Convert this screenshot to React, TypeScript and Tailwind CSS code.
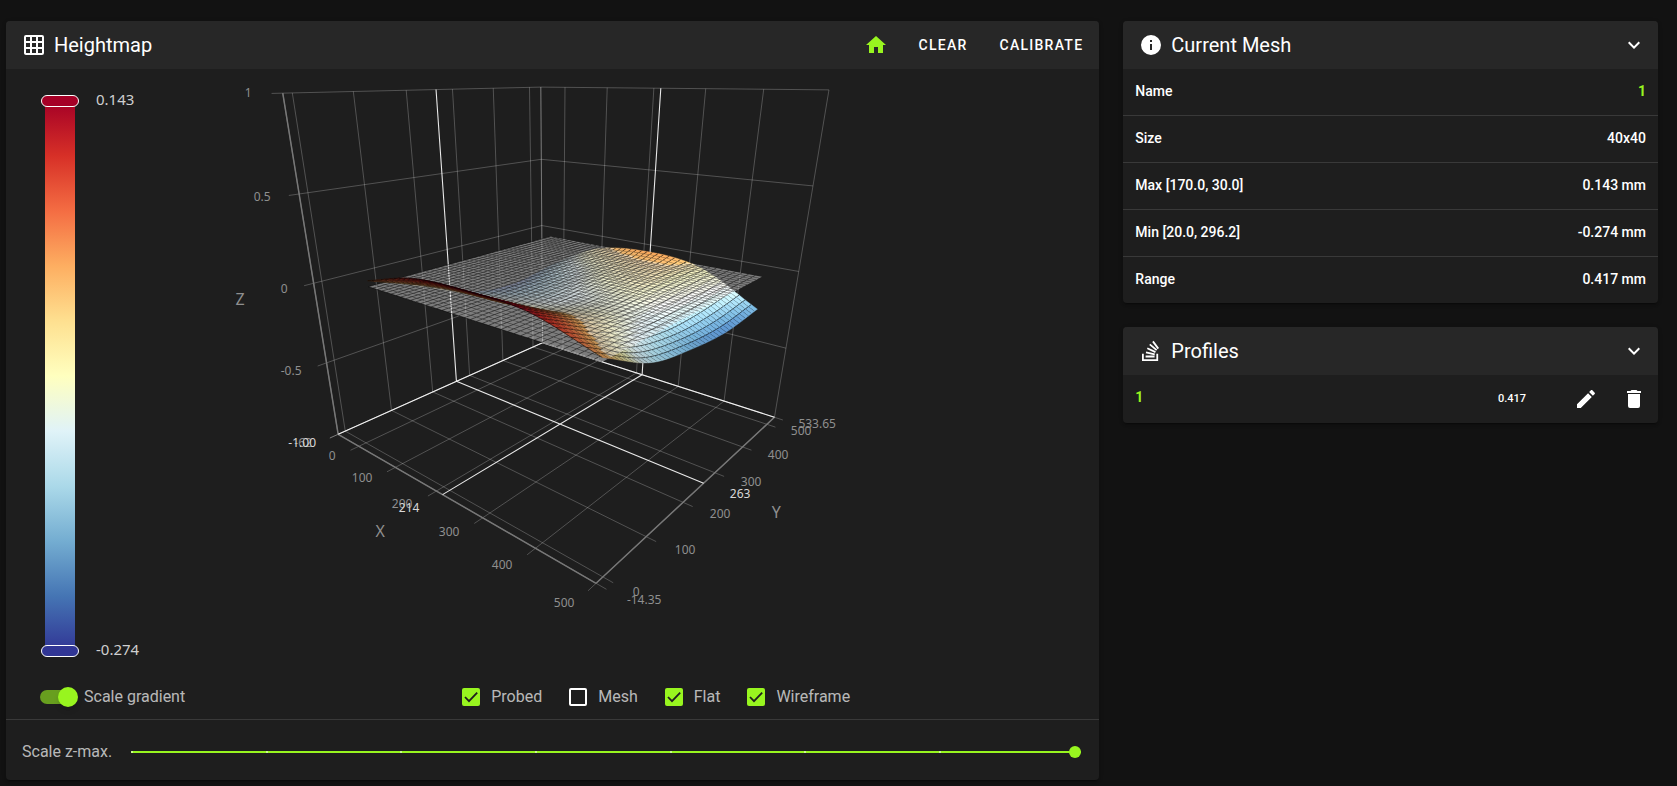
import { useMemo, useState } from "react";
import type { ReactNode } from "react";

const icons = {
  grid: "M10,4V8H14V4H10M16,4V8H20V4H16M16,10V14H20V10H16M16,16V20H20V16H16M14,20V16H10V20H14M8,20V16H4V20H8M8,14V10H4V14H8M8,8V4H4V8H8M10,14H14V10H10V14M4,2H20A2,2 0 0,1 22,4V20A2,2 0 0,1 20,22H4C2.92,22 2,21.1 2,20V4A2,2 0 0,1 4,2Z",
  home: "M10,20V14H14V20H19V12H22L12,3L2,12H5V20H10Z",
  info: "M13,9H11V7H13M13,17H11V11H13M12,2A10,10 0 0,0 2,12A10,10 0 0,0 12,22A10,10 0 0,0 22,12A10,10 0 0,0 12,2Z",
  chevron: "M7.41,8.58L12,13.17L16.59,8.58L18,10L12,16L6,10L7.41,8.58Z",
  pencil:
    "M20.71,7.04C21.1,6.65 21.1,6 20.71,5.63L18.37,3.29C18,2.9 17.35,2.9 16.96,3.29L15.12,5.12L18.87,8.87M3,17.25V21H6.75L17.81,9.93L14.06,6.18L3,17.25Z",
  trash: "M19,4H15.5L14.5,3H9.5L8.5,4H5V6H19M6,19A2,2 0 0,0 8,21H16A2,2 0 0,0 18,19V7H6V19Z",
  stack:
    "M17.36,20.2V14.82H19.15V22H3V14.82H4.8V20.2H17.36M6.77,14.32L7.14,12.56L15.93,14.41L15.56,16.17L6.77,14.32M7.93,10.11L8.69,8.5L16.83,12.28L16.07,13.9L7.93,10.11M10.19,6.12L11.34,4.74L18.24,10.5L17.09,11.87L10.19,6.12M14.64,1.87L20,9.08L18.56,10.15L13.2,2.94L14.64,1.87M6.59,18.41V16.61H15.57V18.41H6.59Z",
};

function Icon({ name, className = "" }: { name: keyof typeof icons; className?: string }) {
  return (
    <svg viewBox="0 0 24 24" aria-hidden="true" className={`size-6 shrink-0 fill-current ${className}`}>
      <path d={icons[name]} />
    </svg>
  );
}

/* ---------- Perspective projection of the unit box ---------- */

type P = [number, number];

const X_MIN = -62;
const X_MAX = 500;
const Y_MIN = -14.35;
const Y_MAX = 533.65;

const toU = (x: number) => (x - X_MIN) / (X_MAX - X_MIN);
const toV = (y: number) => (y - Y_MIN) / (Y_MAX - Y_MIN);

function project(u: number, v: number, z: number): P {
  const t = (z + 1) / 2;
  const w = 1 - 0.29561 * u + 0.33953 * v - 0.2056 * t;
  return [
    (338 + 81.75 * u + 388.56 * v - 113.5 * t) / w,
    (434.3 - 23.43 * u + 24.76 * v - 360.3 * t) / w,
  ];
}

const fmt = ([x, y]: P) => `${x.toFixed(2)},${y.toFixed(2)}`;
const seg = (a: P, b: P) => `M${fmt(a)}L${fmt(b)}`;

/* ---------- Mesh ---------- */

const CONTROL = [
  [0.035, 0.125, 0.142, 0.125, 0.02],
  [-0.09, -0.06, -0.045, -0.015, -0.14],
  [-0.23, -0.17, -0.11, -0.085, -0.2],
  [-0.265, -0.15, -0.055, -0.055, -0.225],
  [-0.22, -0.03, 0.022, -0.015, -0.2],
];

function spline(p: number[], t: number) {
  const n = p.length - 1;
  const at = (i: number) => (i < 0 ? 2 * p[0] - p[1] : i > n ? 2 * p[n] - p[n - 1] : p[i]);
  const i = Math.min(n - 1, Math.floor(t * n));
  const f = t * n - i;
  const [a, b, c, d] = [at(i - 1), at(i), at(i + 1), at(i + 2)];
  return b + 0.5 * f * (c - a + f * (2 * a - 5 * b + 4 * c - d + f * (3 * (b - c) + d - a)));
}

const height = (s: number, t: number) => spline(CONTROL.map((row) => spline(row, s)), t);

const RAMP = [
  [49, 54, 149],
  [69, 117, 180],
  [116, 173, 209],
  [171, 217, 233],
  [224, 243, 248],
  [255, 255, 191],
  [254, 224, 144],
  [253, 174, 97],
  [244, 109, 67],
  [215, 48, 39],
  [165, 0, 38],
];

function shade(z: number, light: number) {
  const k = Math.max(0, Math.min(0.9999, (z + 0.274) / 0.417)) * 10;
  const i = Math.floor(k);
  const rgb = RAMP[i].map((c, n) => Math.min(255, Math.round((c + (RAMP[i + 1][n] - c) * (k - i)) * light)));
  return `rgb(${rgb.join(",")})`;
}

const CELLS = 39;

interface Face {
  key: string;
  depth: number;
  surface: string;
  edges: string;
  color: string;
  flat: string;
  flatEdges: string;
  above: boolean;
}

function buildFaces(): Face[] {
  const u = (i: number) => toU(20 + (446 * i) / CELLS);
  const v = (j: number) => toV(30 + (436 * j) / CELLS);
  const z = (i: number, j: number) => height(i / CELLS, j / CELLS);
  const faces: Face[] = [];
  for (let i = 0; i < CELLS; i++) {
    for (let j = 0; j < CELLS; j++) {
      const ring: [number, number][] = [
        [i, j],
        [i + 1, j],
        [i + 1, j + 1],
        [i, j + 1],
      ];
      const top = ring.map(([a, b]) => project(u(a), v(b), z(a, b)));
      const base = ring.map(([a, b]) => project(u(a), v(b), 0));
      const mid = ring.reduce((sum, [a, b]) => sum + z(a, b), 0) / 4;
      const fx = ((z(i + 1, j) - z(i, j)) * 50) / (80 / CELLS);
      const fy = ((z(i, j + 1) - z(i, j)) * 50) / (80 / CELLS);
      const lambert = (-0.55 * fx + 0.5 * fy + 0.7) / Math.hypot(fx, fy, 1);
      faces.push({
        key: `${i}-${j}`,
        depth: -0.29561 * u(i) + 0.33953 * v(j),
        surface: `M${top.map(fmt).join("L")}Z`,
        edges: `M${fmt(top[3])}L${fmt(top[0])}L${fmt(top[1])}`,
        color: shade(mid, Math.max(0.5, Math.min(1.1, 1.4 * lambert - 0.1))),
        flat: `M${base.map(fmt).join("L")}Z`,
        flatEdges: `M${fmt(base[3])}L${fmt(base[0])}L${fmt(base[1])}`,
        above: mid > 0,
      });
    }
  }
  return faces.sort((a, b) => b.depth - a.depth);
}

function Surface({ probed, flat, wire }: { probed: boolean; flat: boolean; wire: boolean }) {
  const faces = useMemo(buildFaces, []);
  return (
    <g>
      {faces.map((f) => {
        const surface = probed && (
          <g key="s">
            <path d={f.surface} fill={f.color} stroke={f.color} strokeWidth="0.4" />
            {wire && <path d={f.edges} fill="none" stroke="#000" strokeOpacity="0.55" strokeWidth="1" />}
          </g>
        );
        const plane = flat && (
          <g key="p">
            <path d={f.flat} fill="#fff" fillOpacity="0.42" />
            {wire && <path d={f.flatEdges} fill="none" stroke="#000" strokeOpacity="0.45" strokeWidth="1" />}
          </g>
        );
        return <g key={f.key}>{f.above ? [plane, surface] : [surface, plane]}</g>;
      })}
    </g>
  );
}

const X_TICKS = [0, 100, 200, 300, 400, 500];
const Y_TICKS = [0, 100, 200, 300, 400, 500];
const Z_TICKS = [-1, -0.5, 0, 0.5, 1];

const gridPath = [
  ...Z_TICKS.map((z) => seg(project(0, -0.03, z), project(0, 1, z)) + seg(project(0, 1, z), project(1, 1, z))),
  ...[X_MIN, ...X_TICKS].map(
    (x) => seg(project(toU(x), 1, 1), project(toU(x), 1, -1)) + seg(project(toU(x), 1, -1), project(toU(x), -0.03, -1)),
  ),
  ...[Y_MIN, ...Y_TICKS, Y_MAX].map(
    (y) => seg(project(0, toV(y), 1), project(0, toV(y), -1)) + seg(project(0, toV(y), -1), project(1.028, toV(y), -1)),
  ),
].join("");

const axisPath =
  seg(project(0, 0, 1), project(0, 0, -1)) +
  seg(project(0, 0, -1), project(1, 0, -1)) +
  seg(project(1, 0, -1), project(1, 1, -1));

const PU = toU(214);
const PV = toV(263);
const pointerPath =
  seg(project(0, 0, -1), project(0, 1, -1)) +
  seg(project(0, 1, -1), project(1, 1, -1)) +
  seg(project(PU, 1, 1), project(PU, 1, -1)) +
  seg(project(PU, 1, -1), project(PU, 0, -1)) +
  seg(project(0, PV, 1), project(0, PV, -1)) +
  seg(project(0, PV, -1), project(1, PV, -1));

const LABELS: [string, number, number][] = [
  ["1", 248, 93],
  ["0.5", 262, 197],
  ["0", 284, 289],
  ["-0.5", 291, 371],
  ["-62", 303, 443],
  ["0", 332, 456],
  ["100", 362, 478],
  ["200", 402, 504],
  ["300", 449, 532],
  ["400", 502, 565],
  ["500", 564, 603],
  ["0", 636, 592],
  ["-14.35", 644, 600],
  ["100", 685, 550],
  ["200", 720, 514],
  ["300", 751, 482],
  ["400", 778, 455],
  ["500", 801, 431],
  ["533.65", 817, 424],
];

const POINTER_LABELS: [string, number, number][] = [
  ["-1.00", 302, 443],
  ["214", 409, 508],
  ["263", 740, 494],
];

const AXIS_NAMES: [string, number, number][] = [
  ["Z", 240, 299],
  ["X", 380, 531],
  ["Y", 776, 512],
];

function Plot(props: { probed: boolean; flat: boolean; wire: boolean }) {
  return (
    <svg
      viewBox="156 69 943 600"
      role="img"
      aria-label="Bed mesh"
      className="h-[600px] min-w-0 flex-1 font-['Noto_Sans',sans-serif]"
    >
      <path d={gridPath} fill="none" stroke="#fff" strokeOpacity="0.23" strokeWidth="1" />
      <path d={axisPath} fill="none" stroke="#777" strokeWidth="1.5" />
      <path d={pointerPath} fill="none" stroke="#fff" strokeOpacity="0.9" strokeWidth="1.1" />
      <Surface {...props} />
      <g textAnchor="middle" className="fill-[#8f8f8f] text-xs">
        {LABELS.map(([text, x, y]) => (
          <text key={`${text}-${x}`} x={x} y={y + 4}>
            {text}
          </text>
        ))}
      </g>
      <g textAnchor="middle" className="fill-[#d8d8d8] text-xs">
        {POINTER_LABELS.map(([text, x, y]) => (
          <text key={text} x={x} y={y + 4}>
            {text}
          </text>
        ))}
      </g>
      <g textAnchor="middle" className="fill-[#8f8f8f] text-base">
        {AXIS_NAMES.map(([text, x, y]) => (
          <text key={text} x={x} y={y + 6}>
            {text}
          </text>
        ))}
      </g>
    </svg>
  );
}

/* ---------- Controls ---------- */

function Legend() {
  return (
    <div className="mt-8 ml-[39px] flex h-[550px] w-[111px] shrink-0 gap-[21px] font-['Noto_Sans',sans-serif] text-[15px] leading-5 text-[#cfcfcf]">
      <div className="relative w-[30px] bg-[linear-gradient(to_bottom,#a50026,#d73027,#f46d43,#fdae61,#fee090,#ffffbf,#e0f3f8,#abd9e9,#74add1,#4575b4,#313695)]">
        <span className="absolute -top-1.5 -left-1 h-3 w-[38px] rounded-full border border-white bg-[#a50026]" />
        <span className="absolute -bottom-1.5 -left-1 h-3 w-[38px] rounded-full border border-white bg-[#313695]" />
      </div>
      <div className="-mt-3 -mb-2 flex flex-col justify-between">
        <span>0.143</span>
        <span>-0.274</span>
      </div>
    </div>
  );
}

function Check({ label, checked, onChange }: { label: string; checked: boolean; onChange: (v: boolean) => void }) {
  return (
    <label className="flex cursor-pointer items-center gap-[11px]">
      <span className="relative flex size-[18px]">
        <input
          type="checkbox"
          checked={checked}
          onChange={(e) => onChange(e.target.checked)}
          className="size-[18px] cursor-pointer appearance-none rounded-xs border-2 border-white checked:border-[#98f51f] checked:bg-[#98f51f]"
        />
        {checked && (
          <svg viewBox="0 0 18 18" aria-hidden="true" className="pointer-events-none absolute inset-0">
            <path d="M3,9L7,13.2L15.2,4.6" fill="none" stroke="#1e1e1e" strokeWidth="1.8" />
          </svg>
        )}
      </span>
      {label}
    </label>
  );
}

function Card({ children, className = "" }: { children: ReactNode; className?: string }) {
  return (
    <section
      className={`overflow-hidden rounded bg-[#1e1e1e] shadow-[0_3px_1px_-2px_rgba(0,0,0,0.2),0_2px_2px_rgba(0,0,0,0.14),0_1px_5px_rgba(0,0,0,0.12)] ${className}`}
    >
      {children}
    </section>
  );
}

function CardHeader({ icon, title, children }: { icon: keyof typeof icons; title: string; children: ReactNode }) {
  return (
    <header className="flex h-12 items-center gap-2 bg-[#272727] px-4">
      <Icon name={icon} />
      <h2 className="text-xl">{title}</h2>
      <div className="ml-auto flex items-center">{children}</div>
    </header>
  );
}

function Collapse({ title, open, onToggle }: { title: string; open: boolean; onToggle: () => void }) {
  return (
    <button type="button" aria-label={`Toggle ${title}`} aria-expanded={open} onClick={onToggle} className="-mr-1 cursor-pointer">
      <Icon name="chevron" />
    </button>
  );
}

const MESH_ROWS: [string, string][] = [
  ["Name", "1"],
  ["Size", "40x40"],
  ["Max [170.0, 30.0]", "0.143 mm"],
  ["Min [20.0, 296.2]", "-0.274 mm"],
  ["Range", "0.417 mm"],
];

export default function App() {
  const [scaleGradient, setScaleGradient] = useState(true);
  const [probed, setProbed] = useState(true);
  const [mesh, setMesh] = useState(false);
  const [flat, setFlat] = useState(true);
  const [wire, setWire] = useState(true);
  const [zMax, setZMax] = useState(7);
  const [meshOpen, setMeshOpen] = useState(true);
  const [profilesOpen, setProfilesOpen] = useState(true);

  return (
    <main className="grid min-h-screen grid-cols-12 items-start gap-6 bg-[#121212] pt-[21px] pr-[19px] pb-1 pl-1.5 font-[Roboto,sans-serif] text-white">
      <Card className="col-span-8">
        <CardHeader icon="grid" title="Heightmap">
          <button type="button" aria-label="Home" className="cursor-pointer px-[15px] text-[#98f51f]">
            <Icon name="home" />
          </button>
          <button type="button" className="cursor-pointer px-4 text-sm font-medium tracking-[0.09em]">
            CLEAR
          </button>
          <button type="button" className="-mr-4 cursor-pointer px-4 text-sm font-medium tracking-[0.09em]">
            CALIBRATE
          </button>
        </CardHeader>
        <div className="flex">
          <Legend />
          <Plot probed={probed} flat={flat} wire={wire} />
        </div>
        <div className="flex items-center pt-4 pb-2.5 text-base text-white/70">
          <label className="ml-[34px] flex w-[173px] shrink-0 cursor-pointer items-center gap-1.5">
            <span className="relative flex h-5 w-[38px] items-center">
              <input
                type="checkbox"
                role="switch"
                checked={scaleGradient}
                onChange={(e) => setScaleGradient(e.target.checked)}
                className="peer h-3.5 w-9 cursor-pointer appearance-none rounded-full bg-white/30 checked:bg-[#689f1f]"
              />
              <span className="pointer-events-none absolute top-0 left-0 size-5 rounded-full bg-[#bdbdbd] shadow-md peer-checked:left-[18px] peer-checked:bg-[#98f51f]" />
            </span>
            <span className="whitespace-nowrap">Scale gradient</span>
          </label>
          <div className="flex flex-1 items-center justify-center gap-[27px]">
            <Check label="Probed" checked={probed} onChange={setProbed} />
            <Check label="Mesh" checked={mesh} onChange={setMesh} />
            <Check label="Flat" checked={flat} onChange={setFlat} />
            <Check label="Wireframe" checked={wire} onChange={setWire} />
          </div>
        </div>
        <div className="flex items-center gap-[19px] border-t border-white/12 pt-5 pr-[18px] pb-4 pl-4 text-base text-white/70">
          <label htmlFor="z-max">Scale z-max.</label>
          <div className="relative flex h-6 flex-1 items-center">
            <input
              id="z-max"
              type="range"
              min={0}
              max={7}
              value={zMax}
              onChange={(e) => setZMax(Number(e.target.value))}
              className="h-0.5 w-full cursor-pointer appearance-none bg-[#98f51f] [&::-webkit-slider-thumb]:size-3 [&::-webkit-slider-thumb]:appearance-none [&::-webkit-slider-thumb]:rounded-full [&::-webkit-slider-thumb]:bg-[#98f51f]"
            />
            <div className="pointer-events-none absolute inset-x-0 mr-1.5 flex justify-between" aria-hidden="true">
              {[0, 1, 2, 3, 4, 5, 6].map((n) => (
                <span key={n} className="h-0.5 w-0.5 bg-white/50" />
              ))}
              <span className="h-0.5 w-0.5" />
            </div>
          </div>
        </div>
      </Card>

      <div className="col-span-4 flex flex-col gap-6">
        <Card>
          <CardHeader icon="info" title="Current Mesh">
            <Collapse title="Current Mesh" open={meshOpen} onToggle={() => setMeshOpen(!meshOpen)} />
          </CardHeader>
          {meshOpen && (
            <table className="w-full border-separate border-spacing-0 text-sm font-medium">
              <tbody>
                {MESH_ROWS.map(([name, value]) => (
                  <tr
                    key={name}
                    className="h-[47px] last:h-[46px] [&>*]:border-b [&>*]:border-white/12 [&>*]:px-3 [&>*]:pb-0.5 last:[&>*]:border-b-0"
                  >
                    <th scope="row" className="text-left font-medium">
                      {name}
                    </th>
                    <td className={name === "Name" ? "text-right font-bold text-[#98f51f]" : "text-right"}>{value}</td>
                  </tr>
                ))}
              </tbody>
            </table>
          )}
        </Card>
        <Card>
          <CardHeader icon="stack" title="Profiles">
            <Collapse title="Profiles" open={profilesOpen} onToggle={() => setProfilesOpen(!profilesOpen)} />
          </CardHeader>
          {profilesOpen && (
            <div className="flex h-12 items-center px-3">
              <span className="pb-1 text-sm font-bold text-[#98f51f]">1</span>
              <span className="mr-12 ml-auto text-[11px] font-medium">0.417</span>
              <button type="button" aria-label="Edit profile" className="mr-6 cursor-pointer">
                <Icon name="pencil" />
              </button>
              <button type="button" aria-label="Delete profile" className="cursor-pointer">
                <Icon name="trash" />
              </button>
            </div>
          )}
        </Card>
      </div>
    </main>
  );
}
